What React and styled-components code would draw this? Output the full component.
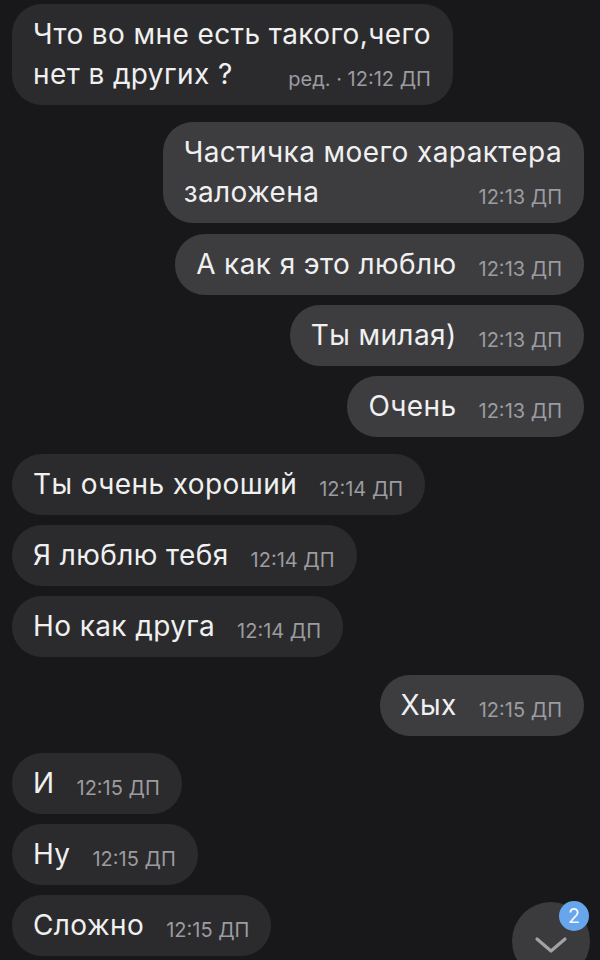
import styled, { createGlobalStyle } from 'styled-components';

const GlobalStyle = createGlobalStyle`
  html, body {
    margin: 0;
    padding: 0;
    background: #18181a;
    height: 960px;
    overflow: hidden;
  }
  body {
    font-family: Inter, "Liberation Sans", Arial, sans-serif;
  }
`;

const messages = [
  { out: false, lines: ['Что во мне есть такого,чего', 'нет в других ?'], time: 'ред. · 12:12 ДП', gap: 4 },
  { out: true, lines: ['Частичка моего характера', 'заложена'], time: '12:13 ДП', gap: 17 },
  { out: true, lines: ['А как я это люблю'], time: '12:13 ДП', gap: 11 },
  { out: true, lines: ['Ты милая)'], time: '12:13 ДП', gap: 10 },
  { out: true, lines: ['Очень'], time: '12:13 ДП', gap: 10 },
  { out: false, lines: ['Ты очень хороший'], time: '12:14 ДП', gap: 17 },
  { out: false, lines: ['Я люблю тебя'], time: '12:14 ДП', gap: 10 },
  { out: false, lines: ['Но как друга'], time: '12:14 ДП', gap: 10 },
  { out: true, lines: ['Хых'], time: '12:15 ДП', gap: 18 },
  { out: false, lines: ['И'], time: '12:15 ДП', gap: 17 },
  { out: false, lines: ['Ну'], time: '12:15 ДП', gap: 10 },
  { out: false, lines: ['Сложно'], time: '12:15 ДП', gap: 10 },
];

function App() {
  return (
    <>
      <GlobalStyle />
      <Chat>
        {messages.map((m, i) => {
          const last = m.lines.length - 1;
          return (
            <Row key={i} $out={m.out} $gap={m.gap}>
              <Bubble $out={m.out}>
                {m.lines.map((line, j) =>
                  j < last ? (
                    <Line key={j}>{line}</Line>
                  ) : (
                    <LastLine key={j}>
                      <span>{line}</span>
                      <Time>{m.time}</Time>
                    </LastLine>
                  )
                )}
              </Bubble>
            </Row>
          );
        })}
      </Chat>
      <ScrollDown>
        <svg width="34" height="20" viewBox="0 0 34 20">
          <path d="M3 4 L17 16 L31 4" fill="none" stroke="#a2a2a6" strokeWidth="3.2" strokeLinecap="round" strokeLinejoin="round" />
        </svg>
        <Badge>2</Badge>
      </ScrollDown>
    </>
  );
}

export default App;

const Chat = styled.div`
  display: flex;
  flex-direction: column;
  padding: 0 16px 0 12px;
`;

const Row = styled.div`
  display: flex;
  justify-content: ${p => (p.$out ? 'flex-end' : 'flex-start')};
  margin-top: ${p => p.$gap}px;
`;

const Bubble = styled.div`
  display: flex;
  flex-direction: column;
  background: ${p => (p.$out ? '#3d3d40' : '#2b2b2d')};
  color: #f0f0f0;
  border-radius: 30px;
  padding: 10px 22px 11px 21px;
  font-size: 28px;
  line-height: 40px;
  letter-spacing: 0.4px;
  white-space: nowrap;
`;

const Line = styled.div`
  height: 40px;
`;

const LastLine = styled.div`
  display: flex;
  justify-content: space-between;
  align-items: center;
  gap: 22px;
  height: 40px;
`;

const Time = styled.span`
  font-size: 20px;
  line-height: 22px;
  letter-spacing: 0;
  color: #9c9ca0;
  position: relative;
  top: 5px;
`;

const ScrollDown = styled.div`
  position: fixed;
  left: 512px;
  top: 902px;
  width: 78px;
  height: 78px;
  border-radius: 50%;
  background: #3b3b3e;
  display: flex;
  justify-content: center;
  padding-top: 33px;
  box-sizing: border-box;
`;

const Badge = styled.div`
  position: absolute;
  left: 47px;
  top: -1px;
  width: 30px;
  height: 30px;
  border-radius: 50%;
  background: #67a6ec;
  color: #f4f8ff;
  font-size: 20px;
  line-height: 30px;
  text-align: center;
`;
